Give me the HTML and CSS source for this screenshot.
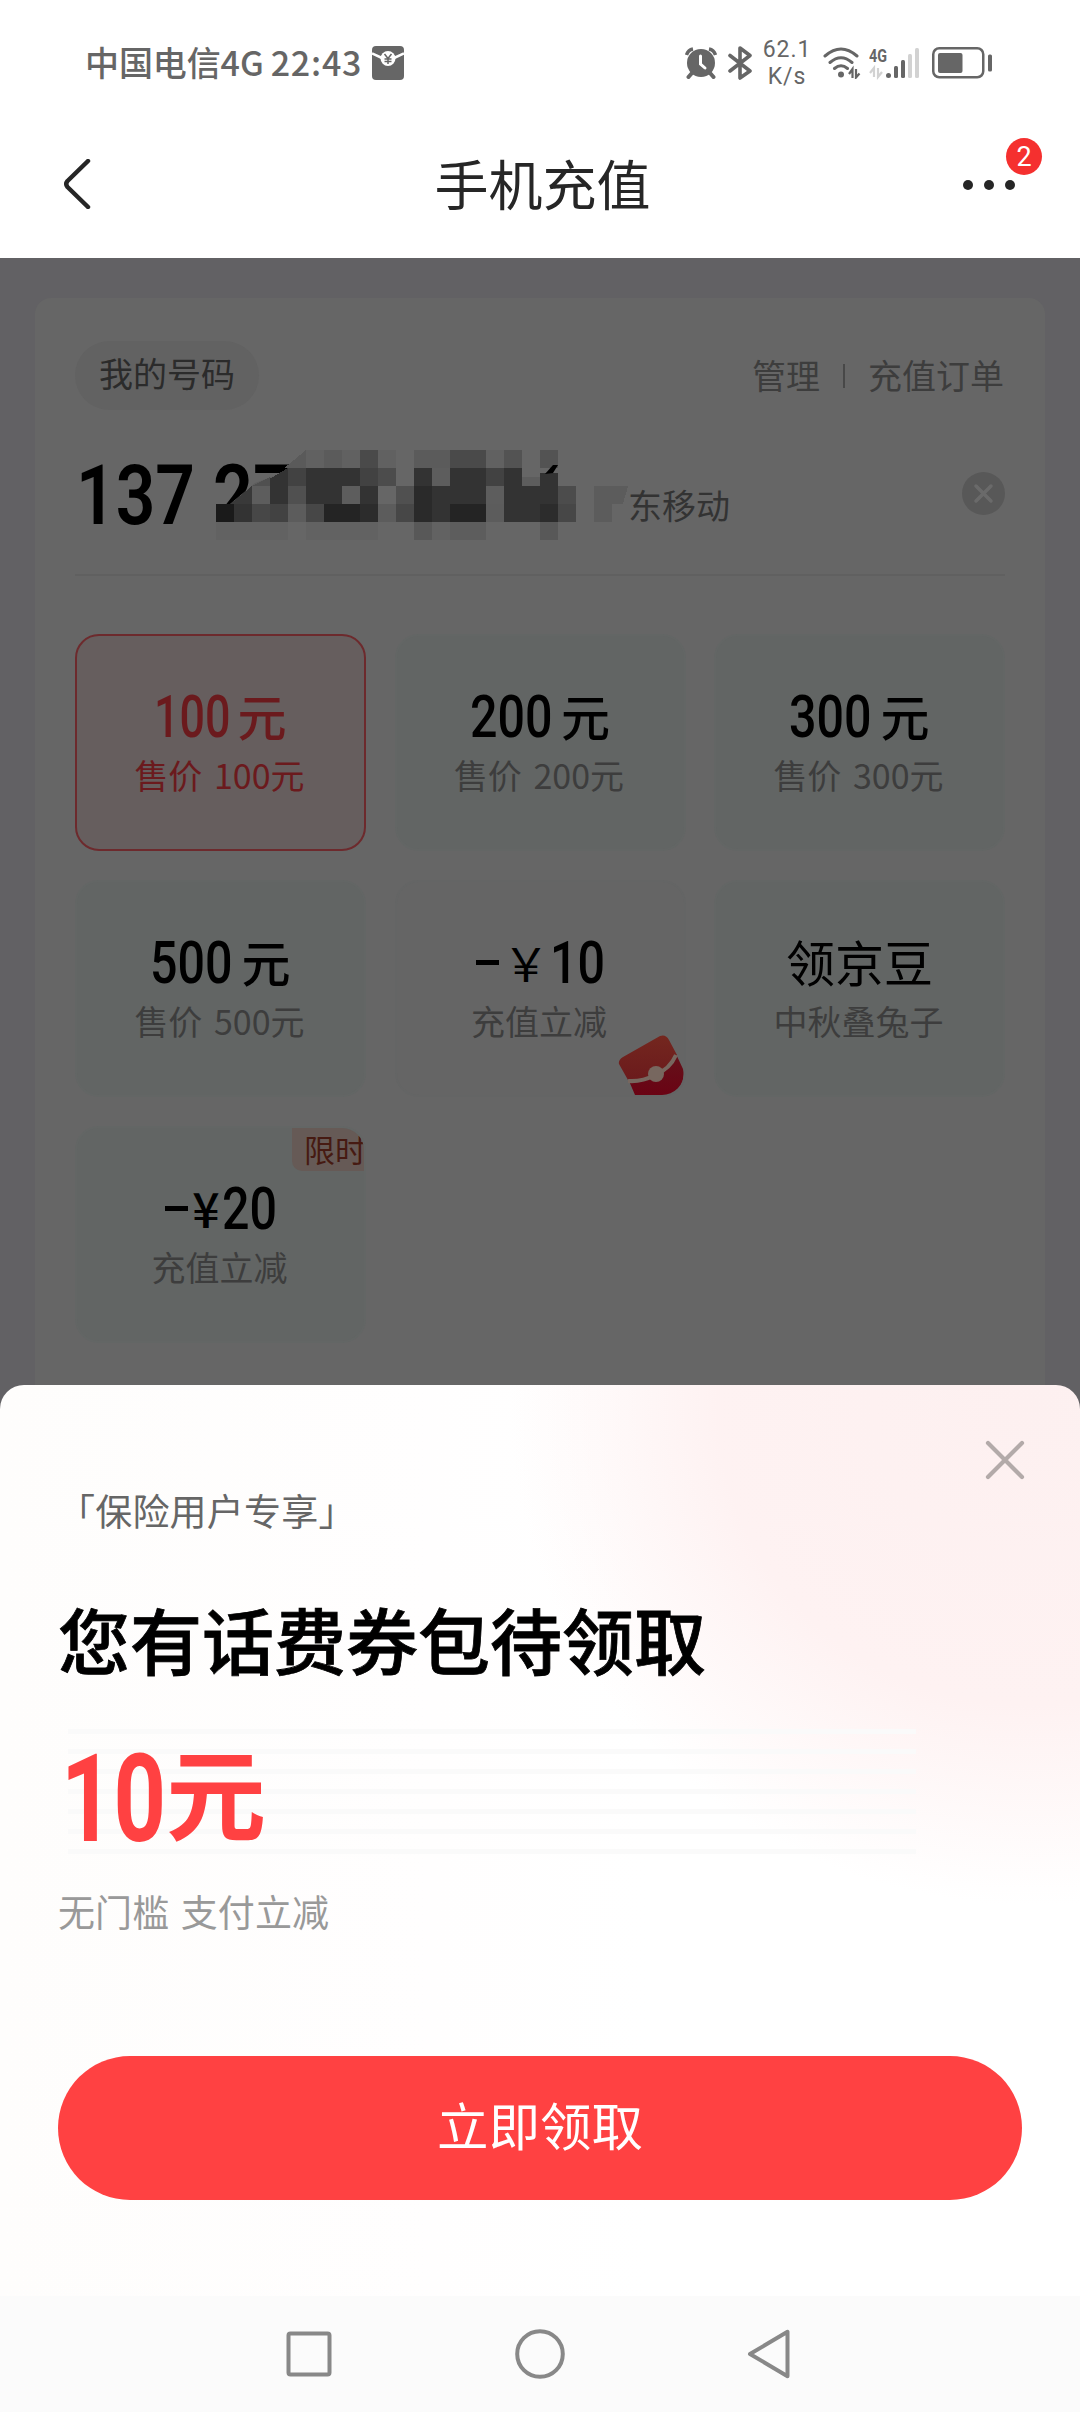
FILE: index.html
```html
<!DOCTYPE html>
<html lang="zh-CN">
<head>
<meta charset="utf-8">
<title>手机充值</title>
<link rel="stylesheet" href="styles.css">
</head>
<body>
<div class="status">
  <div class="status-left">
    <span class="carrier">中国电信4G</span><span class="clock">22:43</span>
    <svg class="envelope" width="32" height="34" viewBox="0 0 32 34">
      <rect width="32" height="34" rx="4" fill="#666"/>
      <path d="M0 7.500 L10 12 M32 7.500 L22 12" stroke="#fff" stroke-width="2.500"/>
      <circle cx="16" cy="12.500" r="7.500" fill="#fff"/>
      <path d="M12.500 8 L16 12.500 L19.500 8 M16 12.500 V18 M12.500 13 H19.500 M12.500 15.500 H19.500" stroke="#666" stroke-width="1.500" fill="none"/>
    </svg>
  </div>
  <div class="status-right">
    <svg width="32" height="32" viewBox="0 0 32 32" class="alarm">
      <circle cx="16" cy="16" r="14" fill="#666"/>
      <path d="M1.500 8 Q3 3 8 2 M30.500 8 Q29 3 24 2" stroke="#666" stroke-width="3.500" fill="none"/>
      <path d="M7 26 L3.500 30 M25 26 L28.500 30" stroke="#666" stroke-width="4" stroke-linecap="round"/>
      <path d="M15.500 9 V17 L20 21" stroke="#fff" stroke-width="3" fill="none" stroke-linecap="round"/>
    </svg>
    <svg width="24" height="34" viewBox="0 0 24 34" class="bt">
      <path d="M2 9.500 L22 25 L12 32 V2 L22 9.500 L2 25" fill="none" stroke="#666" stroke-width="3.600" stroke-linecap="round" stroke-linejoin="round"/>
    </svg>
    <div class="speed"><span>62.1</span><span>K/s</span></div>
    <svg width="38" height="32" viewBox="0 0 38 32" class="wifi">
      <path d="M2 9 Q18 -5 34 9 M7 15.500 Q18 6 29 15.500 M11.500 21.500 Q18 16 24.500 21.500" fill="none" stroke="#666" stroke-width="3" stroke-linecap="round"/>
      <circle cx="18" cy="27.500" r="3" fill="#666"/>
      <path d="M26 27 L29.500 22 V31 M33 22 V30.500 L36.500 26.500" fill="none" stroke="#666" stroke-width="2.200"/>
    </svg>
    <svg width="50" height="34" viewBox="0 0 50 34" class="signal">
      <text x="0" y="15.500" textLength="18" lengthAdjust="spacingAndGlyphs" class="net">4G</text>
      <path d="M1 27 L5 22 V31 M9 22 V31 L13 26" fill="none" stroke="#d2d2d2" stroke-width="2.200"/>
      <circle cx="19.500" cy="29.500" r="2.500" fill="#666"/>
      <rect x="25" y="20" width="4" height="12" rx="1.500" fill="#666"/>
      <rect x="32" y="14" width="4" height="18" rx="1.500" fill="#666"/>
      <rect x="39" y="8" width="4" height="24" rx="1.500" fill="#d2d2d2"/>
      <rect x="46" y="2" width="4" height="30" rx="1.500" fill="#d2d2d2"/>
    </svg>
    <svg width="60" height="32" viewBox="0 0 60 32">
      <rect x="1.250" y="1.250" width="50" height="29" rx="6" fill="none" stroke="#666" stroke-width="2.500"/>
      <rect x="6" y="6" width="24.500" height="20" rx="2" fill="#666"/>
      <rect x="56" y="7.500" width="4" height="17" rx="1.500" fill="#666"/>
    </svg>
  </div>
</div>

<header class="nav">
  <svg class="back" width="28" height="50" viewBox="0 0 28 50">
    <path d="M25 2 L4.500 22 Q2 25 4.500 28 L25 48" fill="none" stroke="#262626" stroke-width="4.500" stroke-linecap="round" stroke-linejoin="round"/>
  </svg>
  <h1>手机充值</h1>
  <div class="more">
    <i></i><i></i><i></i>
    <span class="badge">2</span>
  </div>
</header>

<main>
  <section class="card">
    <div class="card-top">
      <span class="pill">我的号码</span>
      <div class="links"><span>管理</span><i></i><span>充值订单</span></div>
    </div>
    <div class="phone-row">
      <div class="phone">
        <svg width="415" height="108" viewBox="75 441 415 108">
          <text x="76" y="524" textLength="119" lengthAdjust="spacingAndGlyphs" class="digits">137</text>
          <text x="213" y="524" textLength="80" lengthAdjust="spacingAndGlyphs" class="digits">27</text>
          <path d="M216 504 L230 504 L255 483 L285 472 L288 525 L216 526Z" fill="#5d5d5d"/>
          <g transform="translate(216 450) scale(18)" shape-rendering="crispEdges">
            <path d="M3.800 1 L5 0 V1Z" fill="#5a5a5a"/>
            <path d="M5 0h1v1h-1zM7 0h1v1h-1zM9 0h1v1h-1zM15 0h1v1h-1z" fill="#616161"/>
            <path d="M6 0h1v1h-1zM11 0h2v1h-2z" fill="#5b5b5b"/>
            <path d="M8 0h1v1h-1zM13 0h2v1h-2z" fill="#4a4a4a"/>
            <path d="M16 0h1v1h-1zM18 0h1v1h-1z" fill="#535353"/>
            <path d="M2 2 L3 1.500 V2Z" fill="#505050"/>
            <path d="M3 1.600 L4 1 V3 H3Z" fill="#333"/>
            <path d="M4 1h1v1h-1zM8 1h1v1h-1zM15 1h1v1h-1z" fill="#424242"/>
            <path d="M5 1h3v1h-3zM11 1h1v1h-1zM13 1h2v1h-2zM16 1h1v1h-1zM18 1.250h1v.75h-1z" fill="#333"/>
            <path d="M9 1h1v1h-1z" fill="#4c4c4c"/>
            <path d="M12 1h1v1h-1zM17 1.500h1v.5h-1z" fill="#5d5d5d"/>
            <path d="M.8 3 L2 2 V3Z" fill="#393939"/>
            <path d="M4 2h1v1h-1zM10 2h1v1h-1z" fill="#505050"/>
            <path d="M5 2h2v1h-2zM8 2h1v1h-1zM12 2h3v1h-3zM16 2h3v1h-3z" fill="#333"/>
            <path d="M7 2h1v1h-1zM15 2h1v1h-1z" fill="#5d5d5d"/>
            <path d="M11 2h1v2h-1z" fill="#2a2a2a"/>
            <path d="M19 2h1v1h-1z" fill="#4c4c4c"/>
            <path d="M21 2h1.900l-.3 1h-.6v1h-1z" fill="#5c5c5c"/>
            <path d="M0 3h1v1h-1z" fill="#1a1a1a"/>
            <path d="M1 3h1v1h-1zM12 3h1v1h-1zM16 3h2v1h-2z" fill="#333"/>
            <path d="M2 3h1v1h-1zM5 3h1v1h-1zM10 3h1v1h-1zM19 3h1v1h-1z" fill="#474747"/>
            <path d="M3 3h1v1h-1z" fill="#424242"/>
            <path d="M4 3h1v1h-1zM9 3h1v1h-1zM15 3h1v1h-1z" fill="#5c5c5c"/>
            <path d="M6 3h2v1h-2zM13 3h2v1h-2z" fill="#242424"/>
            <path d="M8 3h1v1h-1zM18 3h1v1h-1z" fill="#2c2c2c"/>
            <path d="M0 4h4v1h-4zM5 4h4v1h-4zM12 4h1v1h-1z" fill="#626262"/>
            <path d="M11 4h1v1h-1zM18 4h1v1h-1z" fill="#585858"/>
            <path d="M13 4h2v1h-2z" fill="#5d5d5d"/>
          </g>
          <path d="M545 474 L553 465 H558 L553 473Z" fill="#000"/>
        </svg>
      </div>
      <span class="region">东移动</span>
      <svg class="clear" width="43" height="43" viewBox="0 0 43 43">
        <circle cx="21.500" cy="21.500" r="21.500" fill="#585858"/>
        <path d="M14 14 L29 29 M29 14 L14 29" stroke="#6a6a6a" stroke-width="3.500" stroke-linecap="round"/>
      </svg>
    </div>
    <div class="grid">
      <div class="tile active"><div class="amount"><span class="num">100</span><span>元</span></div><div class="sub">售价 100元</div></div>
      <div class="tile"><div class="amount"><span class="num">200</span><span>元</span></div><div class="sub">售价 200元</div></div>
      <div class="tile"><div class="amount"><span class="num">300</span><span>元</span></div><div class="sub">售价 300元</div></div>
      <div class="tile"><div class="amount"><span class="num">500</span><span>元</span></div><div class="sub">售价 500元</div></div>
      <div class="tile plain"><div class="amount"><span class="dash"></span><span class="yen wide">￥</span><span class="num two">10</span></div><div class="sub">充值立减</div>
        <svg class="packet" width="66" height="60" viewBox="0 0 66 60">
          <defs>
            <linearGradient id="flap" x1="0" y1="0" x2="0" y2="1"><stop offset="0" stop-color="#74271f"/><stop offset="1" stop-color="#6b1a1c"/></linearGradient>
            <linearGradient id="body" x1="0" y1="0" x2="0" y2="1"><stop offset="0" stop-color="#64121a"/><stop offset="1" stop-color="#6a0314"/></linearGradient>
          </defs>
          <path d="M11 46 L37 40 L58 19 L65 34 Q68 50 54 60 H17Z" fill="url(#body)"/>
          <path d="M5 22 L42 1 Q48 -1 51 5 L59 20 Q50 37 37 40 Q25 46 10 45 L1 29 Q0 25 5 22Z" fill="url(#flap)"/>
          <path d="M10 46 Q24 47 37 40 Q52 34 58 20" fill="none" stroke="#77675f" stroke-width="4"/>
          <circle cx="38" cy="39" r="8" fill="#77675f"/>
        </svg>
      </div>
      <div class="tile"><div class="amount text">领京豆</div><div class="sub">中秋叠兔子</div></div>
      <div class="tile"><div class="amount"><span class="dash"></span><span class="yen">¥</span><span class="num two">20</span></div><div class="sub">充值立减</div><span class="tag">限时</span></div>
    </div>
  </section>
</main>

<div class="sheet-wrap">
  <section class="sheet">
    <svg class="close" width="40" height="40" viewBox="0 0 40 40"><path d="M3 3 L37 37 M37 3 L3 37" stroke="#b3aaa9" stroke-width="4.200" stroke-linecap="round"/></svg>
    <p class="eyebrow">「保险用户专享」</p>
    <h2>您有话费券包待领取</h2>
    <div class="coupon"><svg width="106" height="121" viewBox="0 0 106 121"><text x="0" y="110" textLength="105" lengthAdjust="spacingAndGlyphs" class="big">10</text></svg><span>元</span></div>
    <p class="note">无门槛 支付立减</p>
    <button class="cta">立即领取</button>
  </section>
</div>

<footer class="system">
  <svg width="46" height="46" viewBox="0 0 46 46"><rect x="2.500" y="2.500" width="41" height="41" rx="2" fill="none" stroke="#888" stroke-width="4"/></svg>
  <svg width="50" height="50" viewBox="0 0 50 50"><circle cx="25" cy="25" r="22.800" fill="none" stroke="#888" stroke-width="4"/></svg>
  <svg width="44" height="50" viewBox="0 0 44 50"><path d="M40.500 2.800 V47.200 L3 25Z" fill="none" stroke="#888" stroke-width="4" stroke-linejoin="round"/></svg>
</footer>
</body>
</html>
```
FILE: styles.css
```css
* { box-sizing: border-box; }
body {
  margin: 0;
  width: 1080px;
  height: 2412px;
  overflow: hidden;
  background: #fff;
  font-family: "Noto Sans CJK SC", sans-serif;
  display: flex;
  flex-direction: column;
}
h1, h2, p { margin: 0; font-weight: 400; }

/* Status bar */
.status {
  height: 128px;
  padding: 0 88px 2px 85px;
  display: flex;
  justify-content: space-between;
  align-items: center;
  color: #666;
}
.status-left, .status-right { display: flex; align-items: center; }
.carrier { font-size: 34px; line-height: 50px; white-space: nowrap; font-weight: 500; letter-spacing: -.1px; padding-bottom: 2px; }
.clock { font-size: 34px; line-height: 50px; margin-left: 7px; letter-spacing: .8px; font-weight: 500; padding-bottom: 2px; }
.envelope { margin-left: 10px; }
.bt { margin-left: 11px; }
.speed {
  width: 50px;
  margin-left: 10px;
  display: flex;
  flex-direction: column;
  align-items: center;
  font-family: Roboto, sans-serif;
  font-size: 23px;
  line-height: 27px;
  letter-spacing: .9px;
}
.wifi { margin-left: 11px; }
.signal { margin: 0 13px 0 8px; }
.net { font: 700 18px Roboto, sans-serif; fill: #666; }

/* Title bar */
.nav {
  height: 130px;
  padding: 0 65px 0 63px;
  display: flex;
  justify-content: space-between;
  align-items: flex-start;
  color: #262626;
}
.back { margin-top: 31px; }
.nav h1 { font-size: 54px; line-height: 76px; margin: 17px 0 0 31px; }
.more { position: relative; display: flex; gap: 11px; padding-top: 52px; }
.more i { width: 10px; height: 10px; border-radius: 50%; background: #262626; }
.badge {
  position: absolute;
  left: 43px;
  top: 10px;
  width: 36px;
  height: 37px;
  border-radius: 50%;
  background: #f5302f;
  color: #fff;
  font: 27px/38px Roboto, sans-serif;
  text-align: center;
}

/* Dimmed page */
main { height: 1127px; background: #626164; padding: 40px 35px 0; overflow: hidden; }
.card { height: 1087px; background: #666; border-radius: 16px 16px 0 0; padding: 43px 40px 0; }
.card-top { height: 69px; display: flex; justify-content: space-between; align-items: center; }
.pill {
  width: 184px;
  height: 69px;
  border-radius: 35px;
  background: #626262;
  color: #2b2b2b;
  font-size: 34px;
  line-height: 64px;
  text-align: center;
}
.links { display: flex; align-items: center; color: #3d3d3d; font-size: 34px; line-height: 50px; padding: 0 1px 2px 0; }
.links i { width: 2px; height: 24px; margin: 2px 23px 0; background: #484848; }
.phone-row { height: 166px; border-bottom: 2px solid #606060; display: flex; align-items: flex-start; }
.phone { width: 553px; padding-top: 31px; }
.phone svg { overflow: visible; display: block; }
.digits { font: 600 84px Roboto, sans-serif; fill: #000; }
.region { font-size: 34px; line-height: 50px; color: #333; margin-top: 70px; }
.clear { margin: 62px 0 0 auto; }
.grid {
  margin-top: 58px;
  display: grid;
  grid-template-columns: repeat(3, 291px);
  grid-auto-rows: 217px;
  gap: 29px 28.500px;
}
.tile {
  position: relative;
  overflow: hidden;
  border-radius: 24px;
  background: #626564;
  border: 2px solid #636665;
  color: #000;
  text-align: center;
  padding-top: 46px;
}
.tile.plain { background: #656565; border-color: #646565; }
.tile.active { background: #665e5e; border-color: #6d2a2d; color: #6b1a1d; }
.amount {
  height: 66px;
  display: flex;
  justify-content: center;
  align-items: center;
  font-size: 49px;
  line-height: 66px;
  font-weight: 500;
}
.amount.text { font-weight: 400; }
.num {
  font: 500 59px/66px Roboto, sans-serif;
  width: 84px;
  position: relative;
  top: 2px;
  transform: scaleX(.82);
  transform-origin: left;
  margin-right: 7px;
}
.active .num { transform: scaleX(.76); width: 76px; }
.num.two { width: 54px; margin-right: 0; }
.dash { width: 23px; height: 5px; background: #000; margin: 3px 4px 0 0; }
.yen { font-size: 48px; font-weight: 500; margin-right: 2px; }
.yen.wide { font-weight: 400; font-size: 46px; margin-right: 1px; }
.sub { font-size: 34px; line-height: 50px; word-spacing: 4px; color: #3d3d3d; margin: 2px 2px 0 0; }
.active .sub { color: inherit; }
.packet { position: absolute; right: 0; bottom: 0; }
.tag {
  position: absolute;
  right: -2px;
  top: 0;
  width: 74px;
  height: 43px;
  padding-left: 12px;
  background: #665a56;
  border-radius: 0 0 0 10px;
  color: #461a12;
  font-size: 31px;
  line-height: 41px;
  text-align: left;
  white-space: nowrap;
}

/* Bottom sheet */
.sheet-wrap { background: #626164; height: 911px; }
.sheet {
  position: relative;
  height: 911px;
  border-radius: 24px 24px 0 0;
  padding: 98px 58px 0;
  background:
    radial-gradient(ellipse 520px 500px at 1030px 20px, #fdf0f0 0%, #fef2f2 60%, rgba(255, 253, 253, 0) 100%),
    linear-gradient(90deg, #fefdfc 0%, #fffefe 40%, #fff 60%);
}
.close { position: absolute; right: 55px; top: 55px; }
.eyebrow { font-size: 37px; line-height: 54px; color: #666; letter-spacing: .2px; }
.sheet h2 { font-size: 72px; line-height: 104px; font-weight: 500; color: #000; margin-top: 49px; -webkit-text-stroke: .8px #000; }
.coupon {
  margin: 39px 0 0 10px;
  width: 848px;
  height: 125px;
  background: repeating-linear-gradient(180deg, #fafafa 0 5px, transparent 5px 20px);
  display: flex;
  color: #ff4142;
}
.coupon svg { margin: 2px 0 0 -7px; flex: none; overflow: visible; }
.big { font: 700 123px Roboto, sans-serif; fill: #ff4142; }
.coupon span { font-size: 100px; line-height: 121px; font-weight: 700; margin-left: -1px; }
.note { font-size: 37px; line-height: 54px; color: #999; margin-top: 30px; word-spacing: 3px; letter-spacing: .1px; }
.cta {
  display: block;
  width: 964px;
  height: 144px;
  margin-top: 118px;
  border: 0;
  border-radius: 72px;
  background: #ff4142;
  color: #fff;
  font: 400 51.500px/134px "Noto Sans CJK SC", sans-serif;
  padding: 0 0 8px;
}

/* System navigation */
.system {
  height: 116px;
  background: #fbfbfb;
  padding: 0 289px 0 286px;
  display: flex;
  justify-content: space-between;
  align-items: center;
}
```
